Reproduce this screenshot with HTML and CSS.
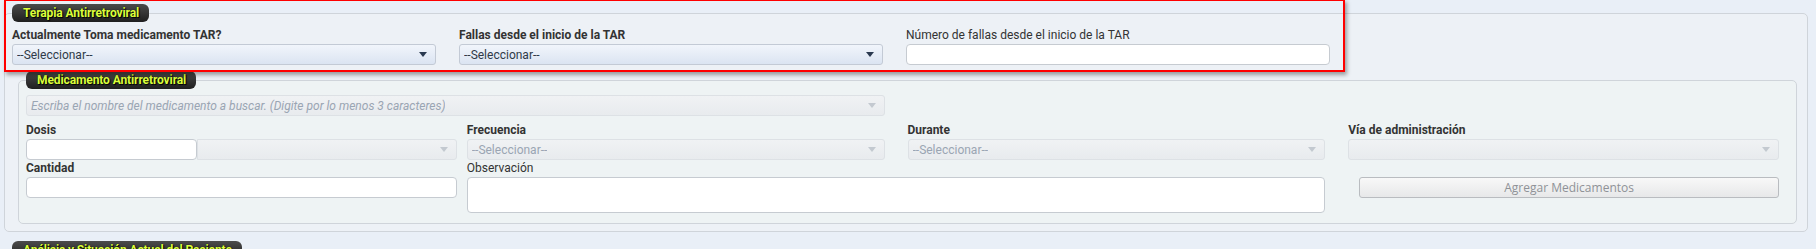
FILE: index.html
```html
<!DOCTYPE html>
<html lang="es">
  <head>
    <meta charset="UTF-8" />
    <meta name="viewport" content="width=device-width, initial-scale=1.0" />
    <title>Terapia Antirretroviral</title>
    <link rel="stylesheet" href="styles.css">
  </head>
  <body>
    <div class="page">
      <fieldset class="panel outer">
        <legend class="tag">Terapia Antirretroviral</legend>
        <div class="row top-row">
          <div class="col">
            <label class="lbl bold">Actualmente Toma medicamento TAR?</label>
            <div class="select">
              <span>--Seleccionar--</span>
              <svg class="caret" width="8" height="5" viewBox="0 0 8 5"><path d="M0 0h8L4 5z" /></svg>
            </div>
          </div>
          <div class="col">
            <label class="lbl bold">Fallas desde el inicio de la TAR</label>
            <div class="select">
              <span>--Seleccionar--</span>
              <svg class="caret" width="8" height="5" viewBox="0 0 8 5"><path d="M0 0h8L4 5z" /></svg>
            </div>
          </div>
          <div class="col">
            <label class="lbl">Número de fallas desde el inicio de la TAR</label>
            <input class="field" type="text" />
          </div>
          <div class="col"></div>
        </div>

        <fieldset class="panel inner">
          <legend class="tag">Medicamento Antirretroviral</legend>
          <div class="row inner-row">
            <div class="cell span-2 pad-wide">
              <div class="select disabled search">
                <span>Escriba el nombre del medicamento a buscar. (Digite por lo menos 3 caracteres)</span>
                <svg class="caret" width="8" height="5" viewBox="0 0 8 5"><path d="M0 0h8L4 5z" /></svg>
              </div>
            </div>
          </div>
          <div class="row inner-row gap-top">
            <div class="cell pad-narrow">
              <label class="lbl bold">Dosis</label>
              <div class="dose">
                <input class="field dose-input" type="text" />
                <div class="select disabled dose-unit">
                  <span></span>
                  <svg class="caret" width="8" height="5" viewBox="0 0 8 5"><path d="M0 0h8L4 5z" /></svg>
                </div>
              </div>
            </div>
            <div class="cell pad-wide">
              <label class="lbl bold">Frecuencia</label>
              <div class="select disabled">
                <span>--Seleccionar--</span>
                <svg class="caret" width="8" height="5" viewBox="0 0 8 5"><path d="M0 0h8L4 5z" /></svg>
              </div>
            </div>
            <div class="cell pad-wide">
              <label class="lbl bold">Durante</label>
              <div class="select disabled">
                <span>--Seleccionar--</span>
                <svg class="caret" width="8" height="5" viewBox="0 0 8 5"><path d="M0 0h8L4 5z" /></svg>
              </div>
            </div>
            <div class="cell pad-narrow">
              <label class="lbl bold">Vía de administración</label>
              <div class="select disabled">
                <span></span>
                <svg class="caret" width="8" height="5" viewBox="0 0 8 5"><path d="M0 0h8L4 5z" /></svg>
              </div>
            </div>

            <div class="cell pad-narrow">
              <label class="lbl bold">Cantidad</label>
              <input class="field" type="text" />
            </div>
            <div class="cell span-2 pad-wide">
              <label class="lbl">Observación</label>
              <textarea class="field note"></textarea>
            </div>
            <div class="cell pad-narrow">
              <label class="lbl">&nbsp;</label>
              <button class="btn" type="button" disabled>Agregar Medicamentos</button>
            </div>
          </div>
        </fieldset>
      </fieldset>

      <fieldset class="panel outer next">
        <legend class="tag">Análisis y Situación Actual del Paciente</legend>
        <div class="row top-row">
          <div class="col"><label class="lbl bold">&nbsp;</label></div>
        </div>
      </fieldset>

      <div class="highlight"></div>
    </div>
  </body>
</html>
```

FILE: styles.css
```css
body {
  margin: 0;
  background-color: #e9eff7;
  font-family: Roboto, "Liberation Sans", Arial, sans-serif;
  font-size: 12px;
  color: #333;
  overflow: hidden;
}
.page {
  position: relative;
  padding-top: 4px;
}
.panel {
  border: 1px solid #cfd4da;
  border-radius: 5px;
  margin: 0;
  min-width: 0;
}
.outer {
  background: #edf1f6;
  margin: 0 8px 0 4px;
  padding: 5px 7px 7px 7px;
}
.outer.next {
  margin-top: 9px;
}
.inner {
  background: #eef3f4;
  margin: 6px 3px 0 6px;
  padding: 6px 7px 10px 7px;
}
.tag {
  background: linear-gradient(#4b4b4b, #1f1f1f);
  color: #dcff3c;
  font-weight: bold;
  font-size: 12px;
  line-height: 18px;
  height: 18px;
  padding: 0 10px 0 11px;
  border-radius: 6px;
  text-shadow: 0 0 1px #000, 1px 1px 1px #000;
  letter-spacing: -0.1px;
}
.row {
  display: grid;
  grid-template-columns: repeat(4, 1fr);
}
.top-row .col {
  padding-right: 23px;
  display: flex;
  flex-direction: column;
}
.inner-row .cell {
  display: flex;
  flex-direction: column;
  min-width: 0;
}
.gap-top {
  margin-top: 6px;
}
.span-2 {
  grid-column: span 2;
}
.pad-wide {
  padding-right: 23px;
}
.pad-narrow {
  padding-right: 10px;
}
.lbl {
  display: block;
  line-height: 16px;
  height: 16px;
  margin-bottom: 1px;
  white-space: nowrap;
}
.bold {
  font-weight: bold;
}
.select {
  box-sizing: border-box;
  height: 21px;
  display: flex;
  align-items: center;
  justify-content: space-between;
  padding: 0 8px 0 4px;
  border: 1px solid #c3cad5;
  border-radius: 3px;
  background: linear-gradient(#f1f5fb, #dbe4f2);
  color: #2f3a48;
  white-space: nowrap;
  overflow: hidden;
}
.select span {
  overflow: hidden;
  text-overflow: clip;
}
.caret {
  flex: none;
  fill: #2a3950;
}
.select.disabled {
  background: linear-gradient(#f0f2f4, #e8ebee);
  border-color: #dde1e5;
  color: #9aa5b3;
}
.select.disabled .caret {
  fill: #c3c9d0;
}
.search {
  color: #a9b2bd;
  font-style: italic;
}
.field {
  box-sizing: border-box;
  height: 21px;
  border: 1px solid #c6cbd1;
  border-radius: 4px;
  background: #fff;
  margin: 0;
  padding: 0 4px;
  font-family: inherit;
  font-size: 12px;
  width: 100%;
}
.note {
  height: 36px;
  resize: none;
  display: block;
}
.dose {
  display: flex;
}
.dose-input {
  width: 171px;
  flex: none;
}
.dose-unit {
  flex: 1;
  border-radius: 0 3px 3px 0;
}
.btn {
  box-sizing: border-box;
  height: 21px;
  margin-left: 11px;
  border: 1px solid #b9bcc0;
  border-radius: 3px;
  background: linear-gradient(#f8f8f8, #e7e8e9);
  color: #8f9297;
  font-family: "Open Sans", Arial, sans-serif;
  font-size: 12px;
  padding: 0;
}
.highlight {
  position: absolute;
  left: 4px;
  top: -1px;
  width: 1337px;
  height: 69px;
  border: 2px solid #f00;
  box-shadow: 2px 3px 4px rgba(0, 0, 0, 0.35);
  pointer-events: none;
}
```
